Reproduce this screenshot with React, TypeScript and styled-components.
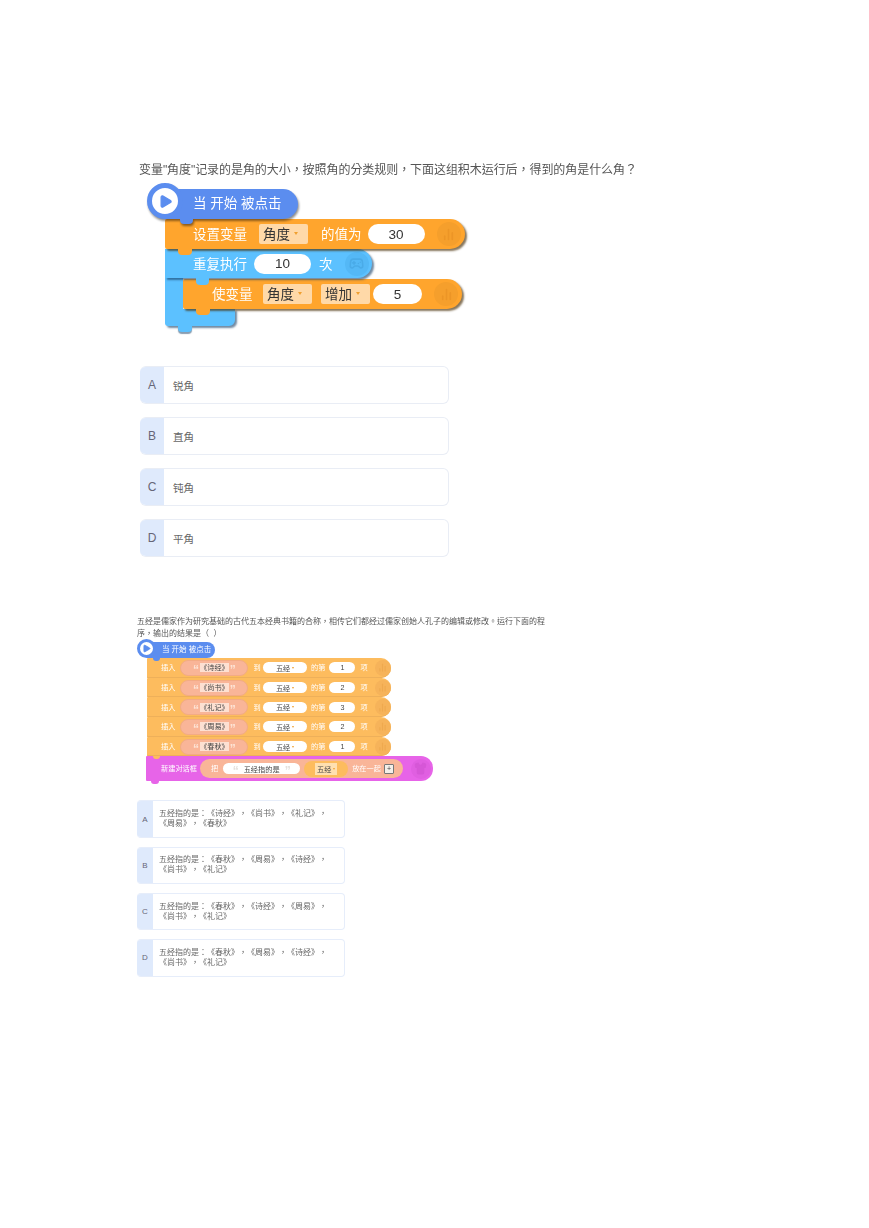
import { createGlobalStyle } from "styled-components";
import styled from "styled-components";
import { BarChart2, Gamepad2, Shirt, Play } from "lucide-react";

const GlobalStyle = createGlobalStyle`
  html, body {
    margin: 0;
    padding: 0;
    background: #fff;
    font-family: "Liberation Sans", "Noto Sans CJK TC", sans-serif;
    text-spacing-trim: space-all;
  }
`;

const ORANGE = "#ffa52d";
const SKY = "#5cc1ff";
const BLUE = "#5b8def";
const SOFT = "#fdbc5e";
const PURPLE = "#e764e8";

const options1 = [
  { key: "A", text: "锐角" },
  { key: "B", text: "直角" },
  { key: "C", text: "钝角" },
  { key: "D", text: "平角" },
];

const options2 = [
  { key: "A", text: "五经指的是：《诗经》，《尚书》，《礼记》，《周易》，《春秋》" },
  { key: "B", text: "五经指的是：《春秋》，《周易》，《诗经》，《尚书》，《礼记》" },
  { key: "C", text: "五经指的是：《春秋》，《诗经》，《周易》，《尚书》，《礼记》" },
  { key: "D", text: "五经指的是：《春秋》，《周易》，《诗经》，《尚书》，《礼记》" },
];

const inserts = [
  { book: "《诗经》", n: "1" },
  { book: "《尚书》", n: "2" },
  { book: "《礼记》", n: "3" },
  { book: "《周易》", n: "2" },
  { book: "《春秋》", n: "1" },
];

const App = () => {
  return (
    <Page>
      <GlobalStyle />
      <Question1>变量"角度"记录的是角的大小，按照角的分类规则，下面这组积木运行后，得到的角是什么角？</Question1>

      <BigDiagram>
        <BigHat>
          <BigPlay>
            <Play size={15} fill={BLUE} color={BLUE} strokeWidth={2} />
          </BigPlay>
          <BigHatLabel>当 开始 被点击</BigHatLabel>
        </BigHat>

        <BigRow $color={ORANGE} $width={300} $indent={18} $z={3}>
          <BigText $pad={28}>设置变量</BigText>
          <Drop $w={49} $ml={12}>角度<Caret /></Drop>
          <BigText $pad={13}>的值为</BigText>
          <Pill $w={57} $ml={6}>30</Pill>
          <IconDot $ml={12} $bg="#f59f2c">
            <BarChart2 size={13} color="#ec9526" strokeWidth={3} />
          </IconDot>
        </BigRow>

        <LoopHead>
          <BigText $pad={28}>重复执行</BigText>
          <Pill $w={57} $ml={7}>10</Pill>
          <BigText $pad={8}>次</BigText>
          <IconDot $ml={12} $bg="#54b8f6">
            <Gamepad2 size={15} color="#4aabe8" strokeWidth={2.5} />
          </IconDot>
        </LoopHead>
        <LoopBody>
          <BigRow $color={ORANGE} $width={279} $indent={18} $z={1}>
            <BigText $pad={29}>使变量</BigText>
            <Drop $w={49} $ml={10.5}>角度<Caret /></Drop>
            <Drop $w={49} $ml={9}>增加<Caret /></Drop>
            <Pill $w={49} $ml={3}>5</Pill>
            <IconDot $ml={12} $bg="#f59f2c">
              <BarChart2 size={13} color="#ec9526" strokeWidth={3} />
            </IconDot>
          </BigRow>
        </LoopBody>
        <LoopFoot />
      </BigDiagram>

      <BigOptions>
        {options1.map((o) => (
          <BigOption key={o.key}>
            <BigLetter>{o.key}</BigLetter>
            <BigOptionText>{o.text}</BigOptionText>
          </BigOption>
        ))}
      </BigOptions>

      <Question2>
        五经是儒家作为研究基础的古代五本经典书籍的合称，相传它们都经过儒家创始人孔子的编辑或修改。运行下面的程序，输出的结果是（ &nbsp;）
      </Question2>

      <SmallDiagram>
        <SmallHat>
          <SmallPlay>
            <Play size={9} fill={BLUE} color={BLUE} strokeWidth={2} />
          </SmallPlay>
          <SmallHatLabel>当 开始 被点击</SmallHatLabel>
        </SmallHat>

        {inserts.map((r) => (
          <SmallRow key={r.book}>
            <SmallText $ml={14}>插入</SmallText>
            <BookPill>
              <Quote>“</Quote>
              <BookName>{r.book}</BookName>
              <Quote>”</Quote>
            </BookPill>
            <SmallText $ml={5}>到</SmallText>
            <SmallPill $w={44} $ml={2.5}>五经<SmallCaret /></SmallPill>
            <SmallText $ml={4}>的第</SmallText>
            <SmallPill $w={26} $ml={4}>{r.n}</SmallPill>
            <SmallText $ml={5}>项</SmallText>
            <SmallDot $ml={7} $bg="#f6b35a">
              <BarChart2 size={9} color="#efa94e" strokeWidth={3} />
            </SmallDot>
          </SmallRow>
        ))}

        <DialogRow>
          <SmallText $ml={15}>新建对话框</SmallText>
          <JoinPill>
            <SmallText $ml={11}>把</SmallText>
            <SmallPill $w={77} $ml={5}>
              <WhiteQuote>“</WhiteQuote>五经指的是<WhiteQuote>”</WhiteQuote>
            </SmallPill>
            <VarPill>
              <VarName>五经<SmallCaret /></VarName>
            </VarPill>
            <SmallText $ml={4}>放在一起</SmallText>
            <PlusBox>+</PlusBox>
          </JoinPill>
          <SmallDot $ml={8} $size={20} $bg="#e05fe1">
            <Shirt size={13} color="#d657d7" fill="#d657d7" />
          </SmallDot>
        </DialogRow>
      </SmallDiagram>

      <SmallOptions>
        {options2.map((o) => (
          <SmallOption key={o.key}>
            <SmallLetter>{o.key}</SmallLetter>
            <SmallOptionText>{o.text}</SmallOptionText>
          </SmallOption>
        ))}
      </SmallOptions>
    </Page>
  );
};

export default App;

const Page = styled.div`
  width: 869px;
  height: 1228px;
  padding-top: 162px;
  box-sizing: border-box;
  overflow: hidden;
  background: #fff;
`;

const Question1 = styled.div`
  margin-left: 139px;
  width: 520px;
  font-size: 12px;
  letter-spacing: -0.06px;
  line-height: 17px;
  color: #555;
  white-space: nowrap;
  filter: blur(0.2px);
`;

const BigDiagram = styled.div`
  margin: 4px 0 0 147px;
  width: 330px;
  display: flex;
  flex-direction: column;
  align-items: flex-start;
  filter: blur(0.35px);
`;

const BigHat = styled.div`
  display: flex;
  align-items: flex-end;
  height: 36px;
  filter: drop-shadow(1px 2px 1px rgba(0, 0, 0, 0.45));
  position: relative;
  z-index: 4;
`;

const BigPlay = styled.div`
  width: 36px;
  height: 36px;
  box-sizing: border-box;
  border: 5px solid ${BLUE};
  border-radius: 50%;
  background: #fff;
  display: flex;
  align-items: center;
  justify-content: center;
  position: relative;
  z-index: 1;
`;

const BigHatLabel = styled.div`
  position: relative;
  margin-left: -18px;
  width: 133px;
  height: 30px;
  box-sizing: border-box;
  padding-left: 28px;
  background: ${BLUE};
  border-radius: 0 15px 15px 0;
  color: #fff;
  font-size: 13.5px;
  line-height: 29px;

  &::after {
    content: "";
    position: absolute;
    left: 15px;
    bottom: -5px;
    width: 13px;
    height: 5px;
    background: ${BLUE};
    border-radius: 0 0 4px 4px;
  }
`;

const BigRow = styled.div<{ $color: string; $width: number; $indent: number; $z: number }>`
  position: relative;
  z-index: ${(p) => p.$z};
  margin-left: ${(p) => p.$indent}px;
  width: ${(p) => p.$width}px;
  height: 30px;
  box-sizing: border-box;
  display: flex;
  align-items: center;
  background: ${(p) => p.$color};
  border-radius: 2px 15px 15px 2px;
  box-shadow: 2px 2px 2px rgba(70, 45, 5, 0.65);

  &::after {
    content: "";
    position: absolute;
    left: 13px;
    bottom: -6px;
    width: 14px;
    height: 6px;
    background: ${(p) => p.$color};
    border-radius: 0 0 4px 4px;
  }
`;

const BigText = styled.span<{ $pad: number }>`
  margin-left: ${(p) => p.$pad}px;
  padding-bottom: 2px;
  color: #fff;
  font-size: 13.5px;
  white-space: nowrap;
`;

const Drop = styled.span<{ $w: number; $ml: number }>`
  margin-left: ${(p) => p.$ml}px;
  width: ${(p) => p.$w}px;
  height: 20px;
  box-sizing: border-box;
  padding: 0 0 2px 4px;
  display: flex;
  align-items: center;
  gap: 4px;
  background: #ffd9a8;
  border-radius: 2px;
  color: #333;
  font-size: 13.5px;
  white-space: nowrap;
`;

const Caret = styled.i`
  width: 0;
  height: 0;
  border-left: 2.5px solid transparent;
  border-right: 2.5px solid transparent;
  border-top: 3px solid #f0a030;
`;

const Pill = styled.span<{ $w: number; $ml: number }>`
  margin-left: ${(p) => p.$ml}px;
  width: ${(p) => p.$w}px;
  height: 20px;
  display: flex;
  align-items: center;
  justify-content: center;
  background: #fff;
  border-radius: 10px;
  color: #333;
  font-size: 13.5px;
`;

const IconDot = styled.span<{ $ml: number; $bg: string }>`
  margin-left: ${(p) => p.$ml}px;
  width: 24px;
  height: 24px;
  display: flex;
  align-items: center;
  justify-content: center;
  flex: none;
  border-radius: 50%;
  background: ${(p) => p.$bg};
`;

const LoopHead = styled.div`
  position: relative;
  z-index: 2;
  margin-left: 18px;
  width: 207px;
  height: 29px;
  display: flex;
  align-items: center;
  background: ${SKY};
  border-radius: 0 15px 15px 0;
  box-shadow: 2px 2px 2px rgba(20, 60, 100, 0.6);

  &::after {
    content: "";
    position: absolute;
    left: 31px;
    bottom: -7px;
    width: 13px;
    height: 7px;
    background: ${SKY};
    border-radius: 0 0 4px 4px;
  }
`;

const LoopBody = styled.div`
  position: relative;
  z-index: 1;
  margin-left: 18px;
  width: 297px;
  padding-top: 1px;
  background: linear-gradient(to right, ${SKY} 18px, transparent 18px);
`;

const LoopFoot = styled.div`
  position: relative;
  z-index: 0;
  margin-left: 18px;
  width: 70px;
  height: 17px;
  background: ${SKY};
  border-radius: 0 0 6px 3px;
  box-shadow: 2px 2px 2px rgba(20, 60, 100, 0.6);

  &::after {
    content: "";
    position: absolute;
    left: 13px;
    bottom: -6px;
    width: 14px;
    height: 6px;
    background: ${SKY};
    border-radius: 0 0 4px 4px;
    box-shadow: 0 2px 1px rgba(20, 60, 100, 0.5);
  }
`;

const BigOptions = styled.div`
  margin: 40px 0 0 140px;
  width: 309px;
  display: flex;
  flex-direction: column;
  gap: 13px;
`;

const BigOption = styled.div`
  height: 38px;
  box-sizing: border-box;
  display: flex;
  align-items: stretch;
  border: 1px solid #e9edf5;
  border-left: none;
  border-radius: 6px;
  overflow: hidden;
  background: #fff;
`;

const BigLetter = styled.div`
  width: 24px;
  flex: none;
  padding-bottom: 1px;
  box-sizing: border-box;
  display: flex;
  align-items: center;
  justify-content: center;
  background: #dfeafc;
  color: #667;
  font-size: 12px;
`;

const BigOptionText = styled.div`
  margin-left: 9px;
  display: flex;
  align-items: center;
  color: #666;
  font-size: 10.5px;
`;

const Question2 = styled.div`
  margin: 59px 0 0 137px;
  width: 412px;
  font-size: 8px;
  line-height: 12px;
  color: #555;
  filter: blur(0.3px);
`;

const SmallDiagram = styled.div`
  margin: -2px 0 0 137px;
  width: 300px;
  display: flex;
  flex-direction: column;
  align-items: flex-start;
  filter: blur(0.35px);
`;

const SmallHat = styled.div`
  margin-top: 1px;
  display: flex;
  align-items: flex-end;
  height: 19px;
  position: relative;
  z-index: 8;
`;

const SmallPlay = styled.div`
  width: 19px;
  height: 19px;
  box-sizing: border-box;
  border: 3px solid ${BLUE};
  border-radius: 50%;
  background: #fff;
  display: flex;
  align-items: center;
  justify-content: center;
  position: relative;
  z-index: 1;
`;

const SmallHatLabel = styled.div`
  position: relative;
  margin-left: -9px;
  width: 68px;
  height: 16px;
  box-sizing: border-box;
  padding-left: 15px;
  background: ${BLUE};
  border-radius: 0 8px 8px 0;
  color: #fff;
  font-size: 7.5px;
  line-height: 15px;
  white-space: nowrap;

  &::after {
    content: "";
    position: absolute;
    left: 6px;
    bottom: -3px;
    width: 7px;
    height: 3px;
    background: ${BLUE};
    border-radius: 0 0 3px 3px;
  }
`;

const SmallRow = styled.div`
  position: relative;
  margin-left: 10px;
  width: 244px;
  height: 19.7px;
  display: flex;
  align-items: center;
  background: ${SOFT};
  border-radius: 1px 10px 10px 1px;
  box-shadow: inset 0 -1px 0 #eeb05a;

  &::after {
    content: "";
    position: absolute;
    left: 6px;
    bottom: -3px;
    width: 7px;
    height: 3px;
    background: ${SOFT};
    border-radius: 0 0 3px 3px;
    z-index: 1;
  }
`;

const SmallText = styled.span<{ $ml: number }>`
  margin-left: ${(p) => p.$ml}px;
  padding-bottom: 1px;
  color: #fff;
  font-size: 7.2px;
  white-space: nowrap;
`;

const BookPill = styled.span`
  margin-left: 5px;
  width: 68px;
  height: 16px;
  box-sizing: border-box;
  display: flex;
  align-items: center;
  justify-content: center;
  gap: 1px;
  background: #f9b598;
  border: 1px solid #f3ab85;
  border-radius: 8px;
`;

const Quote = styled.span`
  color: #fde4d6;
  font-size: 12px;
  font-weight: 700;
  line-height: 12px;
  height: 12px;
  margin-top: 5px;
`;

const WhiteQuote = styled(Quote)`
  color: #e4e0dc;
  margin: 4px 3px 0;
`;

const BookName = styled.span`
  background: #fde0d2;
  color: #444;
  font-size: 7.2px;
  line-height: 9px;
  white-space: nowrap;
`;

const SmallPill = styled.span<{ $w: number; $ml: number }>`
  margin-left: ${(p) => p.$ml}px;
  width: ${(p) => p.$w}px;
  height: 11px;
  display: flex;
  align-items: center;
  justify-content: center;
  gap: 2px;
  background: #fff;
  border-radius: 6px;
  color: #444;
  font-size: 7.2px;
  white-space: nowrap;
`;

const SmallCaret = styled.i`
  width: 0;
  height: 0;
  border-left: 1.5px solid transparent;
  border-right: 1.5px solid transparent;
  border-top: 2px solid #f0a030;
`;

const SmallDot = styled.span<{ $ml: number; $bg: string; $size?: number }>`
  margin-left: ${(p) => p.$ml}px;
  width: ${(p) => p.$size ?? 16}px;
  height: ${(p) => p.$size ?? 16}px;
  flex: none;
  display: flex;
  align-items: center;
  justify-content: center;
  border-radius: 50%;
  background: ${(p) => p.$bg};
`;

const DialogRow = styled.div`
  position: relative;
  margin-left: 9px;
  width: 287px;
  height: 25px;
  display: flex;
  align-items: center;
  background: ${PURPLE};
  border-radius: 1px 12px 12px 1px;

  &::after {
    content: "";
    position: absolute;
    left: 5px;
    bottom: -3px;
    width: 8px;
    height: 4px;
    background: ${PURPLE};
    border-radius: 0 0 3px 3px;
  }
`;

const JoinPill = styled.span`
  margin-left: 3px;
  width: 203px;
  height: 19px;
  display: flex;
  align-items: center;
  background: #f9b598;
  border-radius: 10px;
`;

const VarPill = styled.span`
  margin-left: 4px;
  width: 44px;
  height: 16px;
  display: flex;
  align-items: center;
  justify-content: center;
  background: ${SOFT};
  border-radius: 8px;
`;

const VarName = styled.span`
  display: flex;
  align-items: center;
  gap: 2px;
  padding: 1px 2px;
  background: #ffe0b0;
  color: #444;
  font-size: 7.2px;
`;

const PlusBox = styled.span`
  margin-left: 3px;
  width: 8px;
  height: 8px;
  display: flex;
  align-items: center;
  justify-content: center;
  background: #f4efe9;
  border: 0.5px solid #777;
  border-radius: 1px;
  color: #444;
  font-size: 7px;
  line-height: 7px;
`;

const SmallOptions = styled.div`
  margin: 19px 0 0 137px;
  width: 208px;
  display: flex;
  flex-direction: column;
  gap: 8.7px;
`;

const SmallOption = styled.div`
  height: 37.5px;
  box-sizing: border-box;
  display: flex;
  align-items: stretch;
  border: 1px solid #e6edfa;
  border-left: none;
  border-radius: 4px;
  overflow: hidden;
  background: #fff;
`;

const SmallLetter = styled.div`
  width: 16px;
  flex: none;
  display: flex;
  align-items: center;
  justify-content: center;
  background: #dfeafc;
  color: #667;
  font-size: 8px;
`;

const SmallOptionText = styled.div`
  margin-left: 6px;
  width: 172px;
  align-self: center;
  color: #666;
  font-size: 8px;
  line-height: 10px;
  filter: blur(0.3px);
`;
